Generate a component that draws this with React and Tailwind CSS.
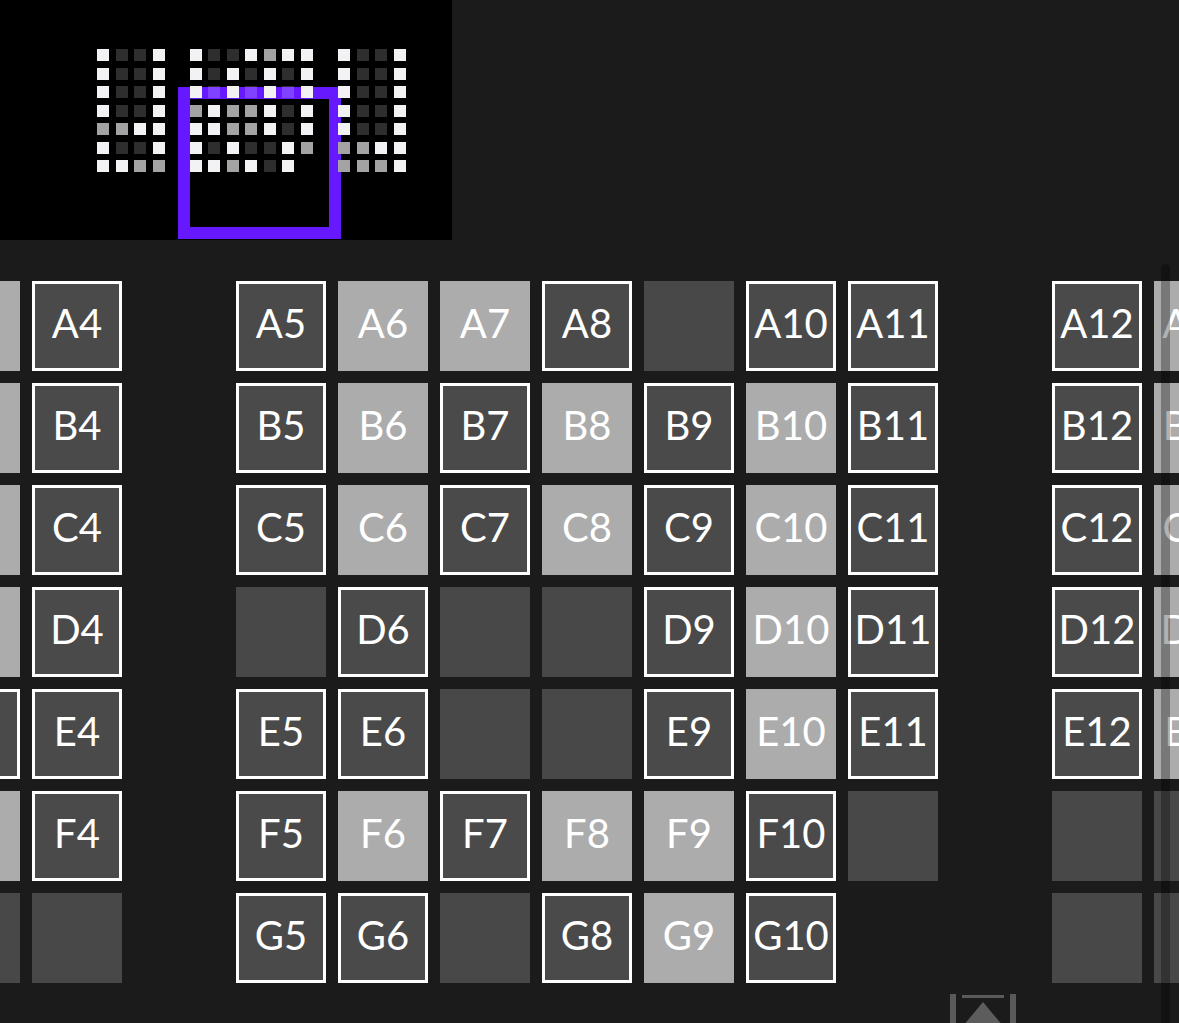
import React from "react";

const ROWS = [
  ["A", "BLLB.BLLBPBB.BLLB"],
  ["B", "BLLB.BLBLBLB.BLLB"],
  ["C", "BLLB.BLBLBLB.BLLB"],
  ["D", "BLLB.PBPPBLB.BLLB"],
  ["E", "PPBB.BBPPBLB.BLLB"],
  ["F", "BLLB.BLBLLBP.PPBB"],
  ["G", "BBPP.BBPBLB_.PPPB"],
];

function seatNumbers(pattern) {
  let n = 0;
  return pattern.split("").map((ch) => {
    if (ch === ".") return { ch, num: null };
    n += 1;
    return { ch, num: n };
  });
}

function Seat({ type, label }) {
  if (type === "." || type === "_") return <div className="w-[90px] h-[90px]" />;
  if (type === "P") return <div className="w-[90px] h-[90px] bg-[#484848]" />;
  const cls =
    type === "B"
      ? "bg-[#4a4a4a] border-[3px] border-white"
      : "bg-[#acacac]";
  return (
    <div
      className={`w-[90px] h-[90px] ${cls} flex items-center justify-center text-white text-[40px] leading-none pb-[6px] [font-family:Lato,sans-serif]`}
    >
      {label}
    </div>
  );
}

function Dot({ type }) {
  if (type === "." || type === "_") return <div className="w-[12px] h-[12px]" />;
  const cls =
    type === "B"
      ? "bg-[#f2f2f4]"
      : type === "L"
      ? "bg-white/[0.18]"
      : "bg-[#a3a3a3]";
  return <div className={`w-[12px] h-[12px] ${cls}`} />;
}

export default function App() {
  return (
    <div className="relative w-[1179px] h-[1023px] overflow-hidden bg-[#1b1b1b]">
      {/* minimap */}
      <div className="relative w-[452px] h-[240px] bg-black pl-[97px] pt-[49px]">
        <div className="absolute left-[178px] top-[87px] w-[163px] h-[152px] border-[12px] border-[#6619ff]" />
        <div className="relative w-max grid grid-cols-[repeat(17,12px)] gap-x-[6.56px] gap-y-[6.5px]">
          {ROWS.map(([r, p]) =>
            p.split("").map((ch, i) => <Dot key={r + i} type={ch} />)
          )}
        </div>
      </div>

      {/* seat grid */}
      <div className="ml-[-274px] mt-[41px] w-max grid grid-cols-[repeat(17,90px)] auto-rows-[90px] gap-[12px]">
        {ROWS.map(([r, p]) =>
          seatNumbers(p).map((s, i) => (
            <Seat key={r + i} type={s.ch} label={s.num ? r + s.num : ""} />
          ))
        )}
      </div>

      {/* overlay scrollbar */}
      <div className="absolute left-[1161px] top-[264px] bottom-[-20px] w-[9px] rounded-full bg-black/30" />

      {/* scroll-to-top control */}
      <svg
        className="absolute left-[950px] top-[994px]"
        width="66"
        height="40"
        viewBox="0 0 66 40"
      >
        <rect x="0" y="0" width="6" height="40" fill="#5a5a5a" />
        <rect x="60" y="0" width="6" height="40" fill="#5a5a5a" />
        <rect x="12" y="1" width="42" height="3" fill="#5a5a5a" />
        <polygon points="33,8 13,32 53,32" fill="#5c5c5c" />
        <rect x="30" y="30" width="6" height="10" fill="#5c5c5c" />
      </svg>
    </div>
  );
}
